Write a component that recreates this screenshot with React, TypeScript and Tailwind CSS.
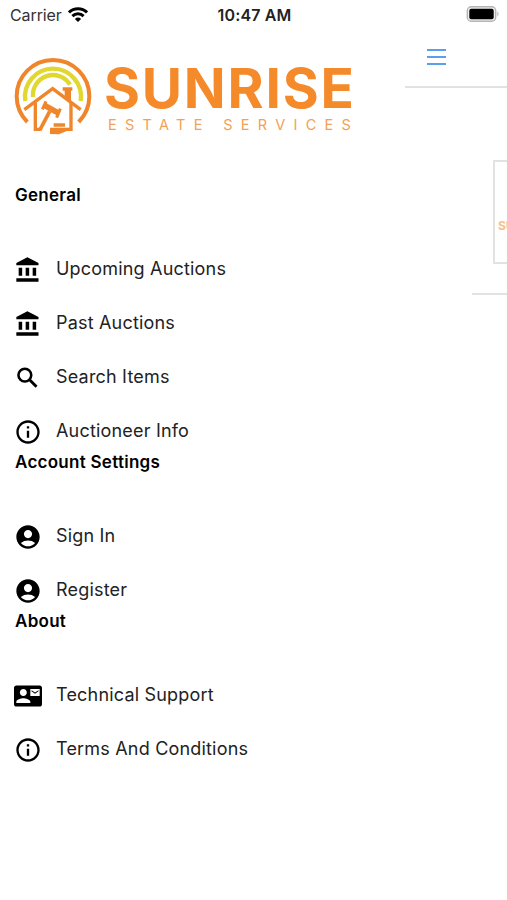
import type { ComponentType } from 'react'
import { MdAccountCircle, MdContactMail, MdInfoOutline } from 'react-icons/md'

interface IconProps {
  className?: string
}

interface MenuItem {
  label: string
  icon: ComponentType<IconProps>
}

interface MenuSection {
  title: string
  items: MenuItem[]
}

function BankIcon({ className }: IconProps) {
  return (
    <svg className={className} viewBox="0 0 24 24" fill="currentColor">
      <path d="M4 10v7h3v-7H4zm6 0v7h3v-7h-3zM2 22h19v-3H2v3zm14-12v7h3v-7h-3zm-4.500-9L2 6v2h19V6l-9.500-5z" />
    </svg>
  )
}

function SearchIcon({ className }: IconProps) {
  return (
    <svg className={className} viewBox="0 0 24 24" fill="none" stroke="currentColor" strokeWidth="2.2">
      <circle cx="9.300" cy="9.500" r="5.500" />
      <path d="m13.300 13.500 6 6" strokeWidth="2.500" />
    </svg>
  )
}

const sections: MenuSection[] = [
  {
    title: 'General',
    items: [
      { label: 'Upcoming Auctions', icon: BankIcon },
      { label: 'Past Auctions', icon: BankIcon },
      { label: 'Search Items', icon: SearchIcon },
      { label: 'Auctioneer Info', icon: MdInfoOutline },
    ],
  },
  {
    title: 'Account Settings',
    items: [
      { label: 'Sign In', icon: MdAccountCircle },
      { label: 'Register', icon: MdAccountCircle },
    ],
  },
  {
    title: 'About',
    items: [
      { label: 'Technical Support', icon: MdContactMail },
      { label: 'Terms And Conditions', icon: MdInfoOutline },
    ],
  },
]

function StatusBar() {
  return (
    <div className="flex h-[30px] items-center pr-2 pl-[10px] text-[16px] text-[#222]">
      <div className="flex flex-1 items-center gap-[6px]">
        <span className="tracking-[-0.1px] text-[#333]">Carrier</span>
        <svg className="-mt-[2px]" width="20" height="15" viewBox="0 0 20 15" fill="none" stroke="#000" strokeWidth="3">
          <path d="M1 5.4a12.8 12.8 0 0 1 18 0" />
          <path d="M4.4 9.1a8 8 0 0 1 11.2 0" />
          <path d="M10 15 6.9 11.9a4.4 4.4 0 0 1 6.2 0z" fill="#000" stroke="none" />
        </svg>
      </div>
      <span className="-mt-px font-semibold tracking-[0.15px] whitespace-nowrap">10:47 AM</span>
      <div className="flex flex-1 justify-end">
        <svg className="-mt-[2px]" width="33" height="16" viewBox="0 0 33 16">
          <rect x="1.3" y="0.8" width="28.4" height="14.4" rx="4" fill="#eee" stroke="#b5b5b5" strokeWidth="1.4" />
          <rect x="3.3" y="2.8" width="24.4" height="10.4" rx="2" fill="#000" />
          <path d="M31.3 5.8c1.6.6 1.6 3.8 0 4.400z" fill="#b5b5b5" />
        </svg>
      </div>
    </div>
  )
}

function LogoMark() {
  return (
    <svg className="shrink-0" width="90" height="90" viewBox="0 0 270 270" fill="none">
      {/* rings */}
      <path d="M58 216A109 109 0 1 1 212 216" stroke="#f0862b" strokeWidth="12" />
      <path d="M52 153A84 84 0 1 1 218 153" stroke="#e2d72f" strokeWidth="13" />
      <path d="M75 141A60 60 0 0 1 186 104" stroke="#e2d72f" strokeWidth="13" />
      {/* house */}
      <path d="M49 179 134 116 218 179" stroke="#f0862b" strokeWidth="10" />
      <path d="M82 158V238H97M189 158V238H176" stroke="#f0862b" strokeWidth="10" />
      <path d="M164 112h29v10h-4v31l-19-14v-17h-6z" fill="#f0862b" />
      {/* gavel */}
      <g stroke="#f0862b">
        <path d="M114 154 103 178M157 176 146 203" strokeWidth="9" />
        <path d="M109 166 151 189" strokeWidth="17" />
        <path d="M125 184 95 241" strokeWidth="11" />
      </g>
      <path d="M137 220h34v10h-34zM126 233h52v9l-25 11-27-1z" fill="#f0862b" />
    </svg>
  )
}

function Logo() {
  return (
    <div className="flex h-[90px] pl-2">
      <LogoMark />
      <div className="flex flex-col pt-[11px] pl-[6px] whitespace-nowrap">
        <span className="text-[55px] leading-[54px] font-bold tracking-[1.8px] text-[#f58a2a]">SUNRISE</span>
        <span className="pl-1 text-[14.5px] leading-5 tracking-[8.3px] text-[#f5a055]">ESTATE SERVICES</span>
      </div>
    </div>
  )
}

function Drawer() {
  return (
    <nav className="w-[405px] shrink-0 pt-5">
      <Logo />
      <div className="pt-[51px]">
        {sections.map((section) => (
          <section key={section.title} className="pl-[14px]">
            <h2 className="h-[51px] pl-px text-[17px] leading-[8px] font-semibold tracking-[0.27px] text-black">
              {section.title}
            </h2>
            {section.items.map(({ label, icon: Icon }) => (
              <a
                key={label}
                className="flex h-[54px] items-center gap-[14px] text-[18px] tracking-[0.19px] text-[#222]"
              >
                <Icon className="mt-[2px] size-7 text-black" />
                <span className="-mt-[2px]">{label}</span>
              </a>
            ))}
          </section>
        ))}
      </div>
    </nav>
  )
}

function PageBehind() {
  return (
    <main className="flex min-w-0 flex-1 flex-col overflow-hidden">
      <div className="h-[58px] border-b-2 border-[#e2e2e2] pt-[19px] pl-[22px]">
        <div className="flex w-[19px] flex-col gap-[5px]">
          <div className="h-[2px] bg-[#5a9fec]" />
          <div className="h-[2px] bg-[#5a9fec]" />
          <div className="h-[2px] bg-[#5a9fec]" />
        </div>
      </div>
      <div className="mt-[72px] ml-[88px] h-[104px] w-[104px] border-2 border-[#e2e2e2] pt-[56px] pl-[3px]">
        <span className="block text-[12px] leading-4 font-bold text-[#f7be8e]">SUNRISE</span>
      </div>
      <div className="mt-[29px] ml-[67px] h-[2px] bg-[#e2e2e2]" />
    </main>
  )
}

export default function App() {
  return (
    <div className="h-[900px] w-[507px] overflow-hidden bg-white font-['Inter',sans-serif]">
      <StatusBar />
      <div className="flex h-[870px]">
        <Drawer />
        <PageBehind />
      </div>
    </div>
  )
}
